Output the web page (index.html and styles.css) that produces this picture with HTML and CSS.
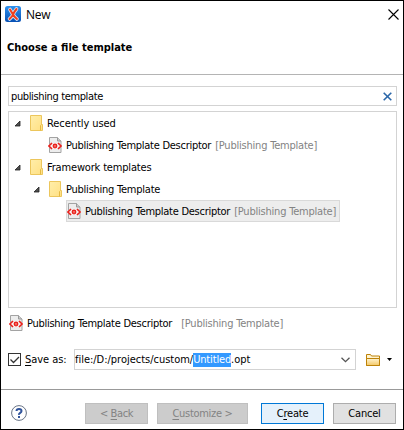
FILE: index.html
```html
<!DOCTYPE html>
<html lang="en">
<head>
<meta charset="utf-8">
<title>New</title>
<link rel="stylesheet" href="styles.css">
</head>
<body>
<svg class="defs" width="0" height="0">
  <defs>
    <linearGradient id="blue" x1="0" y1="0" x2="0" y2="1"><stop offset="0" stop-color="#2e91ee"/><stop offset="1" stop-color="#0750b4"/></linearGradient>
    <linearGradient id="gold" x1="0" y1="0" x2="1" y2="1"><stop offset="0" stop-color="#ffeeaa"/><stop offset="1" stop-color="#ffe083"/></linearGradient>
    <linearGradient id="open" x1="0" y1="0" x2="0" y2="1"><stop offset="0" stop-color="#fff3cf"/><stop offset="1" stop-color="#f3c867"/></linearGradient>
    <symbol id="folder" viewBox="0 0 13 16">
      <path d="M.5.5h11v9h1v6H.5z" fill="url(#gold)" stroke="#ecc65c"/>
      <path d="M10.500 15.500v-5l1-1" fill="none" stroke="#e5b944"/>
    </symbol>
    <symbol id="doc" viewBox="0 0 14 16">
      <path d="M1.500.5h8l3.500 3.500v11.500H1.500z" fill="#ededed" stroke="#a3a3a3"/>
      <path d="M9.500.5V4H13" fill="#ccc" stroke="#999"/>
      <path d="M0 9 3 6h8l3 3-3 3H3z" fill="#f8f4f4"/>
      <path d="M4 6 .9 9 4 12M10 6l3.100 3L10 12" fill="none" stroke="#e8221d" stroke-width="1.700"/>
      <circle cx="7" cy="9" r="2.400" fill="#e8221d"/>
      <path d="M6 8.500h2M6 9.700h2" stroke="#ff9a90" stroke-width=".6"/>
    </symbol>
    <symbol id="arrow" viewBox="0 0 7 7"><path d="M6 1v5H1z" fill="#505050" stroke="#222" stroke-width=".8"/></symbol>
  </defs>
</svg>
<main class="dialog">
  <header class="head">
    <div class="titlebar">
      <svg width="16" height="16"><rect width="16" height="16" rx="2.500" fill="url(#blue)"/><path d="M5 3.500Q6.500 6 8 8.500T12 13M11.500 3Q9 6 8 8.500T4.500 13" fill="none" stroke="#d3e5f5" stroke-width="3.600" stroke-linecap="round"/><path d="M5 3.500Q6.500 6 8 8.500T12 13M11.500 3Q9 6 8 8.500T4.500 13" fill="none" stroke="#f0401e" stroke-width="2" stroke-linecap="round"/></svg>
      <span class="title">New</span>
      <svg class="close" width="11" height="11"><path d="M.5.5l10 10M10.500.5l-10 10" stroke="#000" stroke-width="1.100"/></svg>
    </div>
    <h1>Choose a file template</h1>
  </header>
  <section class="content">
    <div class="search"><span class="query">publishing template</span><svg width="9" height="9"><path d="M.7.7l7.600 7.600M8.300.7L.7 8.300" stroke="#2b67a9" stroke-width="1.600"/></svg></div>
    <div class="tree">
      <div class="row"><svg class="arrow"><use href="#arrow"/></svg><svg class="folder"><use href="#folder"/></svg><span class="recent">Recently used</span></div>
      <div class="row leaf"><svg class="doc"><use href="#doc"/></svg><span class="name">Publishing Template Descriptor</span><span class="kind">[Publishing Template]</span></div>
      <div class="row"><svg class="arrow"><use href="#arrow"/></svg><svg class="folder"><use href="#folder"/></svg><span class="framework">Framework templates</span></div>
      <div class="row nested"><svg class="arrow"><use href="#arrow"/></svg><svg class="folder"><use href="#folder"/></svg><span class="group">Publishing Template</span></div>
      <div class="row selected"><svg class="doc"><use href="#doc"/></svg><span class="name">Publishing Template Descriptor</span><span class="kind">[Publishing Template]</span></div>
    </div>
    <div class="summary"><svg class="doc"><use href="#doc"/></svg><span class="name">Publishing Template Descriptor</span><span class="kind">[Publishing Template]</span></div>
    <div class="save">
      <svg width="13" height="13"><rect x=".5" y=".5" width="12" height="12" fill="#fff" stroke="#333"/><path d="M2.500 6.500l3 3L11 4" fill="none" stroke="#333" stroke-width="1.300"/></svg>
      <span class="label"><u>S</u>ave as:</span>
      <div class="combo"><span class="path">file:/D:/projects/custom/<mark>Untitled</mark>.opt</span><svg width="9" height="6"><path d="M.5.7l4 4 4-4" fill="none" stroke="#555" stroke-width="1.300"/></svg></div>
      <svg class="browse" width="14" height="12"><path d="M.5 11.500V.5h4l1 1.500h8v9.500z" fill="#fff3cf" stroke="#bd8208"/><path d="M.5 4.500h13v7H.5z" fill="url(#open)" stroke="#bd8208"/></svg>
      <svg width="5" height="3"><path d="M0 0h5L2.500 3z"/></svg>
    </div>
  </section>
  <footer class="foot">
    <svg class="help" width="16" height="16"><circle cx="8" cy="8" r="7.400" fill="#fff" stroke="#687385"/><path d="M5.500 6Q5.500 4 8 4T10.500 6Q10.500 7 9.200 7.800T8 9.900" fill="none" stroke="#31549b" stroke-width="2"/><rect x="7" y="11" width="2" height="2" fill="#31549b"/></svg>
    <button class="back" disabled><span>&lt; <u>B</u>ack</span></button>
    <button class="customize" disabled><span><u>C</u>ustomize &gt;</span></button>
    <button class="create"><span>C<u>r</u>eate</span></button>
    <button class="cancel"><span>Cancel</span></button>
  </footer>
</main>
</body>
</html>
```
FILE: styles.css
```css
* { box-sizing: border-box; }
body { margin: 0; background: #fff; font: 11px/16px "DejaVu Sans Condensed", "DejaVu Sans", sans-serif; font-stretch: condensed; color: #000; }
.defs { position: absolute; }
svg { display: block; flex: none; }
u { text-decoration: underline; text-underline-offset: 2px; text-decoration-thickness: 1px; }
.dialog { width: 404px; height: 430px; border: 1px solid #000; display: flex; flex-direction: column; white-space: nowrap; }
.head { height: 74px; border-bottom: 1px solid #b4b4b4; }
.titlebar { display: flex; align-items: center; height: 26px; padding: 0 4px; }
.title { font: 12px/16px "Open Sans", sans-serif; margin-left: 5px; padding-top: 2px; letter-spacing: -0.3px; }
.close { margin-left: auto; }
h1 { margin: 13px 0 0 6px; font-size: 11px; line-height: 16px; font-weight: bold; letter-spacing: 0; }
.content { height: 314px; padding: 11px 6px 0 7px; }
.search { height: 20px; border: 1px solid #d3d3d3; display: flex; align-items: center; justify-content: space-between; padding: 0 4px 0 2px; }
.query { padding-top: 2px; letter-spacing: -0.37px; }
.tree { height: 197px; margin-top: 5px; border: 1px solid #d3d3d3; }
.row { height: 22px; display: flex; align-items: center; padding-left: 5px; }
.row span, .summary span { padding-top: 2px; }
.arrow { width: 7px; height: 7px; }
.folder { width: 13px; height: 16px; margin: 0 4px 0 9px; }
.doc { width: 14px; height: 16px; margin-right: 4px; }
.leaf { padding-left: 39px; }
.nested { padding-left: 24px; }
.selected { width: 274px; margin-left: 57px; padding-left: 0; background: #ededed; border: 1px solid #d9d9d9; }
.name { letter-spacing: -0.27px; }
.kind { color: #838383; margin-left: 4px; letter-spacing: -0.21px; }
.recent { letter-spacing: -0.07px; }
.framework { letter-spacing: -0.17px; }
.group { letter-spacing: -0.24px; }
.summary { height: 30px; display: flex; align-items: center; padding-left: 1px; }
.summary .kind { margin-left: 9px; }
.save { height: 21px; margin-top: 11px; display: flex; align-items: center; }
.label { margin-left: 4px; width: 49px; letter-spacing: -0.05px; }
.combo { height: 21px; width: 282px; border: 1px solid #d3d3d3; display: flex; align-items: center; justify-content: space-between; padding: 0 5px 0 0; }
.path { letter-spacing: -0.02px; }
mark { background: #3399ff; color: #fff; display: inline-block; height: 14px; line-height: 14px; letter-spacing: -0.15px; }
.browse { margin: 0 7px 0 10px; }
.foot { flex: 1; border-top: 1px solid #999; display: flex; align-items: center; padding: 8px 6px 0 10px; }
.help { margin-top: -2px; }
button { height: 21px; padding: 0; border: 1px solid #adadad; border-radius: 0; background: #e1e1e1; font: inherit; color: #000; letter-spacing: -0.2px; }
button:disabled { background: #ccc; border-color: #bfbfbf; color: #838383; }
.back { width: 63px; margin-left: 58px; letter-spacing: -0.4px; }
.customize { width: 91px; margin-left: 9px; letter-spacing: -0.3px; }
.create { width: 63px; margin-left: 13px; background: #e5f1fb; border-color: #0078d7; }
.cancel { width: 63px; margin-left: 9px; }
```
